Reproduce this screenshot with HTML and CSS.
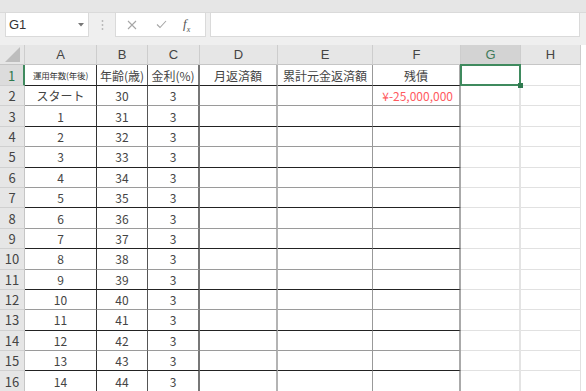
FILE: index.html
```html
<!DOCTYPE html>
<html lang="ja">
<head>
    <meta charset="UTF-8">
    <meta name="viewport" content="width=device-width, initial-scale=1.0">
    <title>返済シミュレーション</title>
    <link rel="stylesheet" href="styles.css">
</head>
<body>
    <div class="top-strip"></div>
    <div class="formula-row">
        <div class="name-box">
            <span>G1</span>
            <svg class="caret" width="6" height="4" viewBox="0 0 6 4"><path d="M0 0 L6 0 L3 3.5 Z" fill="#777"/></svg>
        </div>
        <svg class="grip" width="3" height="12" viewBox="0 0 3 12">
            <circle cx="1.5" cy="2" r="0.9" fill="#b5b5b5"/>
            <circle cx="1.5" cy="6" r="0.9" fill="#b5b5b5"/>
            <circle cx="1.5" cy="10" r="0.9" fill="#b5b5b5"/>
        </svg>
        <div class="fx-buttons">
            <svg width="10" height="10" viewBox="0 0 10 10"><path d="M1 1 L9 9 M9 1 L1 9" stroke="#a6a6a6" stroke-width="1.1"/></svg>
            <svg width="11" height="9" viewBox="0 0 11 9"><path d="M1 4.5 L4 7.5 L10 1" stroke="#a6a6a6" stroke-width="1.1" fill="none"/></svg>
            <span class="fx">f<sub>x</sub></span>
        </div>
        <div class="formula-input"></div>
    </div>

    <table class="sheet">
        <colgroup>
            <col style="width: 25px">
            <col style="width: 72px">
            <col style="width: 51px">
            <col style="width: 52px">
            <col style="width: 78px">
            <col style="width: 95px">
            <col style="width: 88px">
            <col style="width: 60px">
            <col style="width: 60px">
        </colgroup>
        <tr class="colhead">
            <th class="corner">
                <svg width="16" height="16" viewBox="0 0 16 16"><path d="M16 1 L16 16 L1 16 Z" fill="#bdbdbd"/></svg>
            </th>
            <th>A</th><th>B</th><th>C</th><th>D</th><th>E</th><th>F</th><th class="active">G</th><th>H</th>
        </tr>
        <tr class="r1 dk">
            <td class="rh active">1</td>
            <td class="tiny">運用年数(年後)</td>
            <td>年齢(歳)</td>
            <td>金利(%)</td>
            <td>月返済額</td>
            <td>累計元金返済額</td>
            <td>残債</td>
            <td class="sel"></td>
            <td></td>
        </tr>
        <tr>
            <td class="rh">2</td><td>スタート</td><td>30</td><td>3</td><td></td><td></td>
            <td class="money">¥-25,000,000</td><td></td><td></td>
        </tr>
        <tr class="dk"><td class="rh">3</td><td>1</td><td>31</td><td>3</td><td></td><td></td><td></td><td></td><td></td></tr>
        <tr><td class="rh">4</td><td>2</td><td>32</td><td>3</td><td></td><td></td><td></td><td></td><td></td></tr>
        <tr class="dk"><td class="rh">5</td><td>3</td><td>33</td><td>3</td><td></td><td></td><td></td><td></td><td></td></tr>
        <tr><td class="rh">6</td><td>4</td><td>34</td><td>3</td><td></td><td></td><td></td><td></td><td></td></tr>
        <tr class="dk"><td class="rh">7</td><td>5</td><td>35</td><td>3</td><td></td><td></td><td></td><td></td><td></td></tr>
        <tr><td class="rh">8</td><td>6</td><td>36</td><td>3</td><td></td><td></td><td></td><td></td><td></td></tr>
        <tr class="dk"><td class="rh">9</td><td>7</td><td>37</td><td>3</td><td></td><td></td><td></td><td></td><td></td></tr>
        <tr><td class="rh">10</td><td>8</td><td>38</td><td>3</td><td></td><td></td><td></td><td></td><td></td></tr>
        <tr class="dk"><td class="rh">11</td><td>9</td><td>39</td><td>3</td><td></td><td></td><td></td><td></td><td></td></tr>
        <tr><td class="rh">12</td><td>10</td><td>40</td><td>3</td><td></td><td></td><td></td><td></td><td></td></tr>
        <tr class="dk"><td class="rh">13</td><td>11</td><td>41</td><td>3</td><td></td><td></td><td></td><td></td><td></td></tr>
        <tr><td class="rh">14</td><td>12</td><td>42</td><td>3</td><td></td><td></td><td></td><td></td><td></td></tr>
        <tr class="dk"><td class="rh">15</td><td>13</td><td>43</td><td>3</td><td></td><td></td><td></td><td></td><td></td></tr>
        <tr><td class="rh">16</td><td>14</td><td>44</td><td>3</td><td></td><td></td><td></td><td></td><td></td></tr>
    </table>
</body>
</html>
```

FILE: styles.css
```css
body {
    margin: 0;
    width: 586px;
    height: 391px;
    overflow: hidden;
    background-color: #ffffff;
    font-family: "Noto Sans CJK JP", "Liberation Sans", sans-serif;
    color: #444;
}
.top-strip {
    height: 12px;
    background-color: #e6e6e6;
    border-bottom: 1px solid #dadada;
}
.formula-row {
    display: flex;
    align-items: flex-start;
    height: 32px;
    background-color: #efefef;
}
.name-box {
    box-sizing: border-box;
    display: flex;
    align-items: center;
    justify-content: space-between;
    width: 84px;
    height: 24px;
    margin-left: 5px;
    padding: 0 4px 0 3px;
    background-color: white;
    border: 1px solid #dadada;
    border-top: none;
    font-family: "Liberation Sans", sans-serif;
    font-size: 13px;
    color: #333;
}
.grip {
    margin: 6px 0 0 12px;
}
.fx-buttons {
    box-sizing: border-box;
    display: flex;
    align-items: center;
    width: 91px;
    height: 24px;
    margin-left: 11px;
    padding-left: 11px;
    gap: 19px;
    background-color: white;
    border: 1px solid #dadada;
    border-top: none;
}
.fx {
    font-family: "Liberation Serif", serif;
    font-style: italic;
    font-size: 13px;
    color: #555;
    margin-left: -3px;
}
.fx sub {
    font-size: 8px;
}
.formula-input {
    box-sizing: border-box;
    width: 370px;
    height: 24px;
    margin-left: 4px;
    background-color: white;
    border: 1px solid #dadada;
    border-top: none;
}

/* シート */
.sheet {
    table-layout: fixed;
    width: 581px;
    border-collapse: separate;
    border-spacing: 0;
    font-size: 12px;
}
.sheet th, .sheet td {
    box-sizing: border-box;
    padding: 0;
    overflow: hidden;
    white-space: nowrap;
    text-align: center;
    vertical-align: middle;
    border-right: 1px solid #e1e1e1;
    border-bottom: 1px solid #e1e1e1;
}
.sheet tr {
    height: 20.4px;
}
.sheet tr.colhead {
    height: 20px;
}
.sheet tr.r1 {
    height: 21px;
}
.colhead th {
    background-color: #e6e6e6;
    border-right: 1px solid #cdcdcd;
    border-bottom: 1px solid #c6c6c6;
    font-family: "Liberation Sans", sans-serif;
    font-weight: normal;
    font-size: 13px;
    color: #444;
}
.colhead th.active {
    background-color: #d3d3d3;
    color: #3f7a59;
    border-bottom: 1px solid #3f8a5e;
}
.corner {
    text-align: right;
    vertical-align: bottom;
    line-height: 0;
}
.corner svg {
    margin: 0 1px 1px 0;
}
.rh {
    background-color: #e6e6e6;
    font-size: 13px;
    color: #444;
}
.sheet td.rh {
    border-right: 1px solid #c6c6c6;
    border-bottom: 1px solid #d0d0d0;
}
.sheet td.rh.active {
    color: #2e7a4e;
    background-color: #dcdcdc;
    border-right: 2px solid #3f8a5e;
}

/* 表の罫線 */
.sheet td:nth-child(2) { border-right-color: #333; }
.sheet td:nth-child(3) { border-right-color: #555; }
.sheet td:nth-child(4) { border-right: 2px solid #777; }
.sheet td:nth-child(5) { border-right: 2px solid #b4b4b4; }
.sheet td:nth-child(6) { border-right-color: #999; }
.sheet td:nth-child(7) { border-right: 2px solid #aaa; }
.sheet td:nth-child(8) { border-right: 2px solid #e4e4e4; }
.sheet tr td:nth-child(n+2):nth-child(-n+7) { border-bottom-color: #9a9a9a; }
.sheet tr.dk td:nth-child(n+2):nth-child(-n+7) { border-bottom-color: #222; }

.tiny {
    font-size: 8.5px;
    letter-spacing: -0.2px;
    color: #333;
}
.money {
    text-align: right !important;
    padding-right: 6px !important;
    color: #ff5a5f;
}
.sheet td.sel {
    position: relative;
    overflow: visible;
}
.sel::before {
    content: "";
    position: absolute;
    left: -1px;
    top: -1px;
    right: -2px;
    bottom: -1px;
    border: 2px solid #3f8a5e;
}
.sel::after {
    content: "";
    position: absolute;
    right: -4px;
    bottom: -3px;
    width: 5px;
    height: 5px;
    background-color: #2f7a4f;
    z-index: 1;
}
```
